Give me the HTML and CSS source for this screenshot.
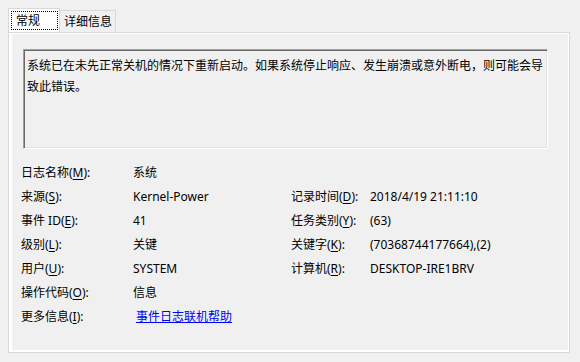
FILE: index.html
```html
<!DOCTYPE html>
<html lang="zh-CN">
<head>
<meta charset="utf-8">
<title>事件属性</title>
<link rel="stylesheet" href="styles.css">
</head>
<body>
<div class="tabs">
  <div class="tab tab-active"><span class="focus">常规</span></div>
  <div class="tab">详细信息</div>
</div>
<div class="panel">
  <div class="desc">系统已在未先正常关机的情况下重新启动。如果系统停止响应、发生崩溃或意外断电，则可能会导致此错误。</div>
  <div class="grid">
    <div class="lbl">日志名称(<u>M</u>):</div><div class="val">系统</div><div></div><div></div>
    <div class="lbl">来源(<u>S</u>):</div><div class="val">Kernel-Power</div><div class="lbl">记录时间(<u>D</u>):</div><div class="val">2018/4/19 21:11:10</div>
    <div class="lbl">事件 ID(<u>E</u>):</div><div class="val">41</div><div class="lbl">任务类别(<u>Y</u>):</div><div class="val">(63)</div>
    <div class="lbl">级别(<u>L</u>):</div><div class="val">关键</div><div class="lbl">关键字(<u>K</u>):</div><div class="val">(70368744177664),(2)</div>
    <div class="lbl">用户(<u>U</u>):</div><div class="val">SYSTEM</div><div class="lbl">计算机(<u>R</u>):</div><div class="val">DESKTOP-IRE1BRV</div>
    <div class="lbl">操作代码(<u>O</u>):</div><div class="val">信息</div><div></div><div></div>
    <div class="lbl">更多信息(<u>I</u>):</div><div class="val"><a class="link" href="#">事件日志联机帮助</a></div><div></div><div></div>
  </div>
</div>
</body>
</html>
```
FILE: styles.css
```css
html, body {
  margin: 0;
  padding: 0;
  background: #f0f0f0;
}
body {
  padding: 8px 0 0 8px;
  width: 580px;
  height: 362px;
  box-sizing: border-box;
  font-family: "Noto Sans", "Noto Sans CJK SC", sans-serif;
  font-size: 12px;
  color: #000;
}
.tabs {
  display: flex;
  align-items: flex-end;
  height: 24px;
}
.tab {
  box-sizing: border-box;
  height: 22px;
  width: 57px;
  margin-left: -1px;
  border: 1px solid #d9d9d9;
  border-bottom: none;
  background: #f0f0f0;
  padding-left: 4px;
  line-height: 21px;
  white-space: nowrap;
}
.tab-active {
  height: 24px;
  width: 52px;
  margin-left: 0;
  background: #ffffff;
  padding: 2px 0 0 2px;
  position: relative;
  z-index: 1;
}
.focus {
  display: block;
  box-sizing: border-box;
  width: 47px;
  height: 19px;
  border: 1px dotted #000;
  padding-left: 4px;
  line-height: 17px;
}
.panel {
  box-sizing: border-box;
  width: 562px;
  height: 321px;
  border: 1px solid #d9d9d9;
  box-shadow: inset 3px 0 0 #fff, inset -1px 0 0 #fff, inset 0 1px 0 #fff, inset 0 -2px 0 #fff;
  padding: 16px 0 0 14px;
}
.desc {
  box-sizing: border-box;
  width: 525px;
  height: 100px;
  margin-bottom: 12px;
  border-top: 1px solid #a0a0a0;
  border-left: 1px solid #a0a0a0;
  border-right: 1px solid #ffffff;
  border-bottom: 1px solid #ffffff;
  box-shadow: inset 1px 1px 0 #696969, inset -1px -1px 0 #e3e3e3;
  padding: 4px 3px 0 3px;
  line-height: 21px;
  font-family: "Noto Sans CJK SC", sans-serif;
}
.grid {
  display: grid;
  grid-template-columns: 112px 158px 79px 1fr;
  grid-auto-rows: 24px;
  margin-left: -2px;
  line-height: 24px;
  white-space: nowrap;
}
.link {
  color: #0000ff;
  text-decoration: underline;
  margin-left: 3px;
}
u {
  text-decoration-thickness: 1px;
  text-underline-offset: 2px;
}
```
